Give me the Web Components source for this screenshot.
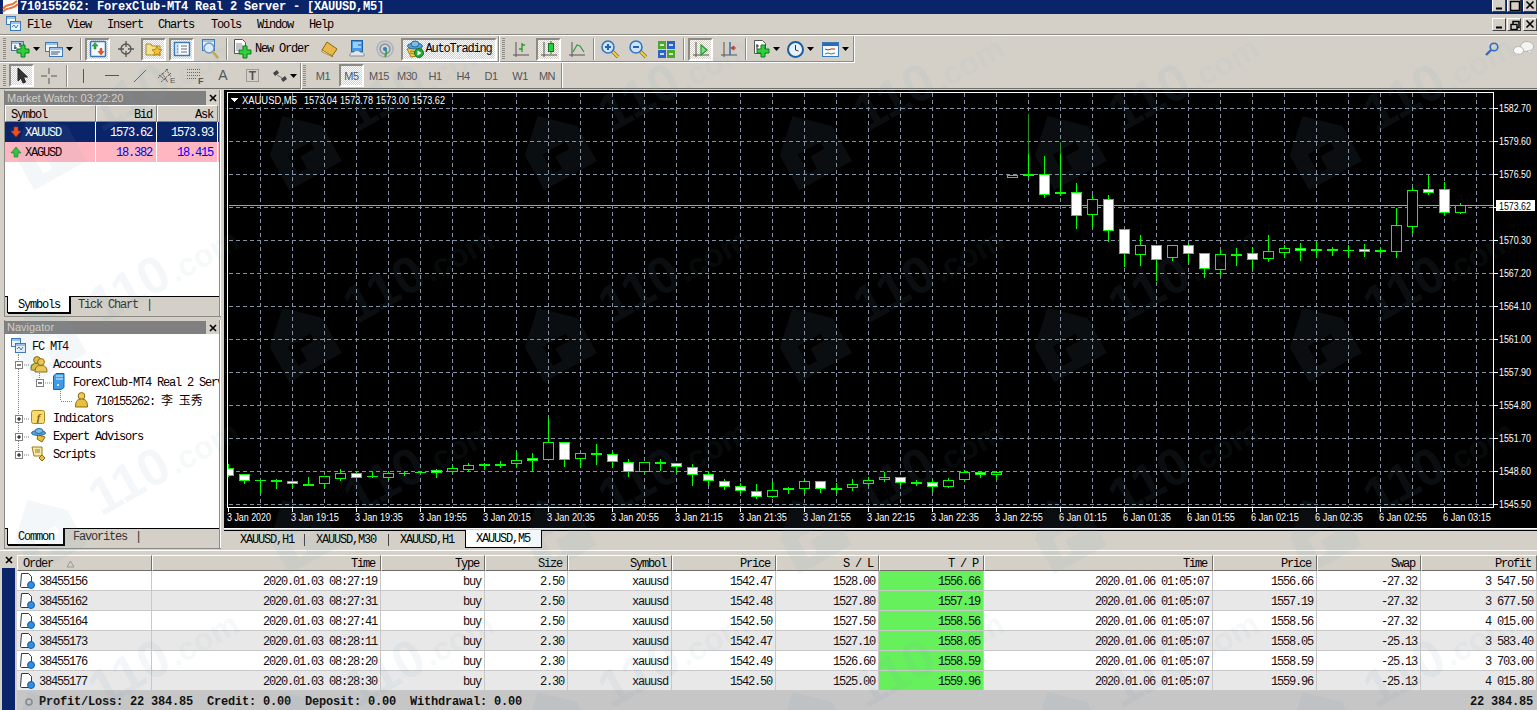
<!DOCTYPE html>
<html>
<head>
<meta charset="utf-8">
<title>MT4</title>
<style>
  html, body { margin: 0; padding: 0; overflow: hidden; background: #d4d0c8; }
</style>
</head>
<body>
<mt-app></mt-app>
<script>
// Shared bits
const UI_FONT = `12px/1 "Liberation Mono", "Noto Sans CJK SC", monospace`;
const svg = (w, h, body) => `<svg width="${w}" height="${h}" viewBox="0 0 ${w} ${h}" style="display:block;flex:none;overflow:visible">${body}</svg>`;
const plus = (x, y) => `<path d="M${x + 4} ${y}h4v4h4v4h-4v4h-4v-4h-4v-4h4z" fill="#2fd03a" stroke="#0c7a22"/>`;
const axes = `<path d="M4 2v15M1 15h16" stroke="#555" fill="none"/>`;
const win = (x, y, w, h) => `<rect x="${x}.5" y="${y}.5" width="${w}" height="${h}" fill="#eef4fb" stroke="#3b78b8"/><rect x="${x + 1}" y="${y + 1}" width="${w - 1}" height="2" fill="#9cc2e8"/>`;
const lens = (sign) => `<path d="M11 11l6 6" stroke="#8a6a10" stroke-width="3.4"/><path d="M11 11l6 6" stroke="#f0d050" stroke-width="2"/><circle cx="7" cy="7" r="6" fill="#cfe2f7" stroke="#2f78c8" stroke-width="1.6"/><path d="${sign}" stroke="#2a62a8" stroke-width="2"/>`;
const dd = svg(7, 4, `<path d="M0 0h7l-3.5 4z" fill="#000"/>`);
const head = (x, y, c) => `<circle cx="${x}" cy="${y}" r="3.4" fill="${c}" stroke="#8a6a10"/><path d="M${x - 6} ${y + 10}c0-5 2-6.5 6-6.5s6 1.500 6 6.500z" fill="${c}" stroke="#8a6a10"/>`;

const ICONS = {
  appicon: svg(15, 14, `<rect width="15" height="14" fill="#fff"/><path d="M0 9C4 2 7 8 14 1M0 12C4 6 8 11 15 4" stroke="#e8743a" stroke-width="1.800" fill="none"/>`),
  winicon: svg(15, 15, `${win(0, 0, 9, 8)}${win(4, 5, 10, 9)}<path d="M6 11l2-2 2 3 2-3" stroke="#3b78b8" fill="none"/>`),
  newchart: svg(19, 18, `${win(0, 1, 12, 9)}<path d="M3 8h3M4 5v4M8 4h2M9 3v4" stroke="#333"/>${plus(6, 5)}`),
  profile: svg(18, 17, `${win(0, 1, 12, 9)}${win(4, 6, 13, 9)}<path d="M6 11h9M6 13h7" stroke="#456"/>`),
  watch: svg(18, 18, `<rect x="1.500" y="1.500" width="15" height="15" rx="1" fill="#f4f8fd" stroke="#3b78b8" stroke-width="1.500"/><path d="M6 2.500l3 3.500H7v3H5V6H3z" fill="#27b53a" stroke="#127a22" stroke-width=".5"/><path d="M12 15l-3-3.500h2v-3h2v3h2z" fill="#e8562a" stroke="#a83a12" stroke-width=".5"/>`),
  data: svg(16, 16, `<circle cx="8" cy="8" r="5" fill="none" stroke="#555" stroke-width="1.300"/><path d="M8 0v6M8 10v6M0 8h6M10 8h6" stroke="#555" stroke-width="1.300"/>`),
  nav: svg(18, 18, `<path d="M1 4h5l1 2h8v9H1z" fill="#f6e08a" stroke="#a88a30"/><path d="M12 6l1.600 3.400 3.400.4-2.600 2.400.8 3.400-3.200-1.800-3.200 1.800.8-3.400-2.600-2.400 3.400-.4z" fill="#f2c230" stroke="#a87a10" stroke-width=".8"/>`),
  term: svg(18, 18, `<rect x="1.500" y="2.500" width="15" height="13" fill="#fff" stroke="#3b78b8" stroke-width="1.500"/><rect x="3" y="4" width="3" height="10" fill="#cfe0f2"/><path d="M8 6h6M8 9h6M8 12h6" stroke="#667" /><path d="M4 6h1M4 9h1M4 12h1" stroke="#c33"/>`),
  tester: svg(19, 20, `${win(1, 0, 12, 11)}<circle cx="8" cy="9" r="5" fill="#dbe9f8" stroke="#6f93b8" stroke-width="1.400"/><path d="M12 13l5 6" stroke="#c9a83a" stroke-width="2.400"/>`),
  order: svg(19, 20, `<path d="M1.500.5h8l3 3v11h-11z" fill="#fff" stroke="#555"/><path d="M3 5h6M3 7h7M3 9h7M3 11h4" stroke="#889"/>${plus(6, 7)}`),
  book: svg(17, 16, `<path d="M6 1l10 7-5 7L1 9z" fill="#e8b848" stroke="#8a6414"/><path d="M1 9l10 6 1 1-11-5z" fill="#fff0c0" stroke="#8a6414" stroke-width=".6"/>`),
  options: svg(16, 18, `<rect x="2.500" y=".5" width="11" height="11" fill="#3f9bea" stroke="#1a62a8"/><path d="M4 3h8M4 5h5M4 7h8" stroke="#fff"/><path d="M1 16c-1-3 2-4 4-4 1-2 5-2 6 0 3 0 5 2 4 4z" fill="#dfe7ef" stroke="#7f8f9f"/>`),
  signals: svg(18, 18, `<circle cx="9" cy="9" r="8" fill="none" stroke="#a8b4c0" stroke-width="1.500"/><circle cx="9" cy="9" r="5" fill="none" stroke="#7f93a8" stroke-width="1.500"/><circle cx="9" cy="9" r="2" fill="#3a7ab8"/><path d="M10 10c1 3 0 5-1 7" stroke="#3aa04a" stroke-width="1.800" fill="none"/>`),
  auto: svg(18, 18, `<path d="M1 9l14-2 2 8-12 2z" fill="#f0cc58" stroke="#9a7a18"/><ellipse cx="9" cy="6" rx="7.500" ry="3" fill="#58a0d8" stroke="#2a6aa0"/><ellipse cx="9" cy="4" rx="4" ry="3" fill="#7cbce8" stroke="#2a6aa0"/><path d="M4 11l6 1M4 13l4 1" stroke="#9a7a18"/><circle cx="13" cy="13" r="4.500" fill="#1fa83a" stroke="#0c7a22"/><path d="M11.500 10.500l4 2.500-4 2.500z" fill="#fff"/>`),
  bar: svg(18, 18, `${axes}<path d="M10 3v9M7 9h3M10 5h3" stroke="#1f9a2a" fill="none" stroke-width="1.300"/>`),
  candle: svg(18, 19, `${axes}<path d="M11 1v13" stroke="#1a7a22"/><rect x="8.500" y="3.500" width="5" height="8" fill="#26d03a" stroke="#0c7a22"/>`),
  line: svg(18, 18, `${axes}<path d="M5 12l4-7 3 1 4 6" stroke="#2f9a3f" fill="none" stroke-width="1.200"/>`),
  zoomin: svg(18, 18, lens("M4 7h6M7 4v6")),
  zoomout: svg(18, 18, lens("M4 7h6")),
  tile: svg(17, 17, `<rect width="8" height="8" fill="#4aa82a"/><rect x="9" width="8" height="8" fill="#2a62c8"/><rect y="9" width="8" height="8" fill="#2a62c8"/><rect x="9" y="9" width="8" height="8" fill="#4aa82a"/><path d="M2 4h4M11 4h4M2 13h4M11 13h4" stroke="#fff" stroke-width="1.500"/>`),
  scroll: svg(18, 18, `${axes}<path d="M9 5l6 5-6 5z" fill="#7fe08a" stroke="#1f9a2a" stroke-width="1.200"/>`),
  shift: svg(18, 18, `${axes}<path d="M10 2v13" stroke="#2a62a8" stroke-width="1.400"/><path d="M16 8h-3M11 8l3-2v4z" fill="#c83a1a" stroke="#c83a1a"/>`),
  template: svg(17, 18, `<path d="M1.500.5h8l3 3v10h-11z" fill="#fff" stroke="#555"/><path d="M3 6h3M4 4v5" stroke="#333"/>${plus(4, 5)}`),
  clock: svg(17, 17, `<circle cx="8.500" cy="8.500" r="7.500" fill="#e8f2fb" stroke="#1a5ea8" stroke-width="2"/><path d="M8.500 4v5l3 1" stroke="#333" fill="none"/>`),
  tmpl: svg(17, 15, `<rect x=".5" y=".5" width="16" height="14" fill="#f4f8fd" stroke="#3b78b8"/><rect x="1" y="1" width="15" height="3" fill="#2a6ab8"/><path d="M3 7l3 1 3-1 4 0" stroke="#a83a1a" fill="none"/><path d="M3 12l3-1 3 1 4-1" stroke="#2f9a3f" fill="none"/>`),
  search: svg(14, 14, `<circle cx="9" cy="5" r="3.800" fill="none" stroke="#2f6ac8" stroke-width="1.600"/><path d="M6 8l-5 5" stroke="#2f6ac8" stroke-width="2.400"/>`),
  chat: svg(22, 16, `<ellipse cx="14" cy="5.500" rx="6.500" ry="5" fill="#f4f4f2" stroke="#b4b4b0"/><path d="M17 9l2 4-5-3z" fill="#f4f4f2" stroke="#b4b4b0" stroke-width=".6"/><ellipse cx="5.500" cy="9.500" rx="5" ry="4" fill="#fafaf8" stroke="#b4b4b0"/><path d="M3 13l-1 2 4-2z" fill="#fafaf8" stroke="#b4b4b0" stroke-width=".6"/>`),
  cursor: svg(12, 17, `<path d="M2 1v13l3-3 2 5 2.500-1-2-5h4z" fill="#333" stroke="#222"/>`),
  cross: svg(16, 16, `<path d="M8 0v6M8 10v6M0 8h6M10 8h6" stroke="#555"/>`),
  vline: svg(3, 14, `<path d="M1.500 0v14" stroke="#555"/>`),
  hline: svg(14, 3, `<path d="M0 1.500h14" stroke="#555"/>`),
  trend: svg(14, 14, `<path d="M1 13L13 1" stroke="#666"/>`),
  channel: svg(20, 20, `<path d="M1 12l10-9M4 16l10-9M5 7l5 8M9 3l5 8M2 9l9 7" stroke="#555" fill="none" stroke-dasharray="2 1"/><text x="13" y="17" font-size="8" font-family="Liberation Sans" fill="#555">E</text>`),
  fibo: svg(19, 20, `<path d="M1 3.500h14M1 6.500h14M1 9.500h14M1 12.500h10" stroke="#666" stroke-dasharray="1 1"/><text x="12" y="18" font-size="9" font-family="Liberation Sans" font-weight="bold" fill="#555">F</text>`),
  letterA: svg(12, 17, `<text x="6" y="13" text-anchor="middle" font-size="14" font-family="Liberation Sans" fill="#555">A</text>`),
  labelT: svg(15, 16, `<rect x="1.500" y="1.500" width="12" height="12" fill="none" stroke="#666" stroke-dasharray="1 1"/><text x="7.500" y="12" text-anchor="middle" font-size="12" font-weight="bold" font-family="Liberation Sans" fill="#555">T</text>`),
  arrows: svg(15, 14, `<path d="M1 4l4-3 2 3-4 3zM9 10l4-3 2 3-4 3z" fill="#444"/><path d="M5 6l5 3" stroke="#777"/>`),
  down: svg(12, 12, `<path d="M4 1h4v4h3l-5 6-5-6h3z" fill="#f0501e" stroke="#b03010" stroke-width=".6"/>`),
  up: svg(12, 12, `<path d="M6 1l5 6H8v4H4V7H1z" fill="#35c040" stroke="#0c7a22" stroke-width=".6"/>`),
  doc: svg(15, 16, `<path d="M1.500.5h7l3 3v11h-10c-1 0-1-1-1-1z" fill="#fff" stroke="#2a3a4a"/><circle cx="11" cy="12" r="3.500" fill="#2f8ee0" stroke="#1a5ea8"/>`),
  accounts: svg(18, 18, `<circle cx="4" cy="12" r="3.500" fill="#22c040"/>${head(7, 5, "#e8c040")}${head(11, 7, "#f0cc50")}`),
  server: svg(12, 17, `<path d="M3 0.500h8v14l-3 2H0.500V3z" fill="#3f9bea" stroke="#1a62a8"/><path d="M3 3h7M3 6h7" stroke="#dff0ff"/><circle cx="5" cy="12" r="1" fill="#fff"/>`),
  user: svg(13, 16, `<circle cx="6.500" cy="4" r="3.400" fill="#f0cc50" stroke="#8a6a10"/><path d="M.5 15c0-6 2-8 6-8s6 2 6 8z" fill="#e8c040" stroke="#8a6a10"/>`),
  func: svg(14, 14, `<rect x=".5" y=".5" width="13" height="13" rx="2" fill="#f8dc70" stroke="#a88a20"/><text x="7" y="11" text-anchor="middle" font-size="11" font-style="italic" font-weight="bold" font-family="Liberation Serif" fill="#8a5a10">f</text>`),
  expert: svg(16, 15, `<path d="M7 7l7 2-3 5-5-3z" fill="#e8c040" stroke="#8a6a10"/><ellipse cx="7.500" cy="5" rx="7" ry="2.500" fill="#58a0d8" stroke="#2a6aa0"/><ellipse cx="8" cy="3" rx="4" ry="2.500" fill="#7cbce8" stroke="#2a6aa0"/>`),
  scriptI: svg(15, 15, `<path d="M1 1h10v9H3z" fill="#f6e8a8" stroke="#9a7a18"/><path d="M4 4h5M4 6h5" stroke="#9a7a18"/><path d="M11 9l3 3-3 3-3-3z" fill="#e8c040" stroke="#8a6a10"/>`)
};

// Title bar with window buttons
class MtWinButtons extends HTMLElement {
  constructor() {
    super();
    this.attachShadow({ mode: "open" });
    const middle = this.getAttribute("restore") !== null
      ? `<path d="M5 5V2.500h6v6H9" fill="none" stroke="#000" stroke-width="1.500"/><rect x="3" y="5.500" width="6" height="5" fill="none" stroke="#000" stroke-width="1.400"/>`
      : `<rect x="2.500" y="1.500" width="9" height="9" fill="none" stroke="#000" stroke-width="1.500"/>`;
    this.shadowRoot.innerHTML = `
      <style>
        :host { display: flex; flex: none; height: 13px; gap: 0; }
        b { display: block; width: 14px; height: 13px; background: #d4d0c8; border: solid; border-width: 1px; border-color: #fff #404040 #404040 #fff; box-sizing: border-box; margin-right: 1px; }
        b:last-child { margin: 0 0 0 1px; }
        svg { display: block; }
      </style>
      <b><svg width="12" height="11"><path d="M3 8.500h6" stroke="#000" stroke-width="2"/></svg></b>
      <b><svg width="13" height="11">${middle}</svg></b>
      <b><svg width="12" height="11"><path d="M2.500 1.500l7 7M9.500 1.500l-7 7" stroke="#000" stroke-width="1.600"/></svg></b>
    `;
  }
}

class MtTitlebar extends HTMLElement {
  constructor() {
    super();
    this.attachShadow({ mode: "open" });
    this.shadowRoot.innerHTML = `
      <style>
        :host { display: flex; flex: none; align-items: center; height: 14px; background: #0a246a; overflow: hidden; padding-left: 3px; }
        .t { color: #fff; font-weight: bold; letter-spacing: -.2px; margin-left: 2px; white-space: pre; flex: 1; }
        mt-win-buttons { margin-top: -3px; }
      </style>
      ${ICONS.appicon}
      <span class="t">710155262: ForexClub-MT4 Real 2 Server - [XAUUSD,M5]</span>
      <mt-win-buttons></mt-win-buttons>
    `;
  }
}

class MtMenubar extends HTMLElement {
  constructor() {
    super();
    this.attachShadow({ mode: "open" });
    const items = [["File", 27], ["View", 67], ["Insert", 107], ["Charts", 158], ["Tools", 211], ["Window", 257], ["Help", 309]];
    let cur = 21;
    const html = items.map(([name, x]) => {
      const m = x - cur;
      cur = x + name.length * 6;
      return `<span style="margin-left:${m}px">${name}</span>`;
    }).join("");
    this.shadowRoot.innerHTML = `
      <style>
        :host { display: flex; flex: none; align-items: center; height: 20px; padding-left: 6px; }
        span { letter-spacing: -1.200px; width: auto; margin-top: 2px; }
        .sp { flex: 1; }
        svg { margin-top: -1px; }
      </style>
      ${ICONS.winicon}${html}<div class="sp"></div><mt-win-buttons restore></mt-win-buttons>
    `;
  }
}

// One toolbar button: slotted icon and optional label
class MtTool extends HTMLElement {
  constructor() {
    super();
    this.attachShadow({ mode: "open" });
    this.shadowRoot.innerHTML = `
      <style>
        :host { display: flex; flex: none; align-items: center; justify-content: center; gap: 3px; height: 23px; box-sizing: border-box; white-space: pre; }
        :host([pressed]) { background: repeating-conic-gradient(#fff 0 25%, #d4d0c8 0 50%) 0 0 / 2px 2px; border: 2px solid; border-color: #8c8a84 #fff #fff #8c8a84; }
      </style>
      <slot></slot>
    `;
  }
}

// A strip of tools, gripper, separators
class MtToolbar extends HTMLElement {
  constructor() {
    super();
    this.attachShadow({ mode: "open" });
    this.shadowRoot.innerHTML = `
      <style>
        :host { display: flex; flex: none; align-items: center; box-sizing: border-box; }
      </style>
      <slot></slot>
    `;
  }
}

const SEP = `display:block;flex:none;width:1px;height:22px;background:#8c8a84;border-right:1px solid #fff`;
const GRIP = `display:block;flex:none;width:3px;height:22px;background:repeating-linear-gradient(#8c8a84 0 1px,#d4d0c8 1px 2px)`;
const EDGE = `display:block;flex:none;width:1px;height:26px;background:#fff;border-left:1px solid #8c8a84`;
const label = (s, ml = 0) => `<span style="letter-spacing:-1.2px;margin-left:${ml}px">${s}</span>`;
const tf = (s) => `<span style="font:11px 'Liberation Sans',sans-serif;letter-spacing:-.5px;color:#555">${s}</span>`;

function buildTools(list) {
  let cur = 0;
  return list.map((it) => {
    const [kind, x, w, body, pressed] = it;
    const m = x - cur;
    if (kind === "sep" || kind === "grip" || kind === "edge") {
      const st = kind === "sep" ? SEP : kind === "grip" ? GRIP : EDGE;
      const bw = kind === "grip" ? 3 : 2;
      cur = x + bw;
      return `<i style="${st};margin-left:${m}px"></i>`;
    }
    cur = x + w;
    return `<mt-tool ${pressed ? "pressed" : ""} style="width:${w}px;margin-left:${m}px">${body}</mt-tool>`;
  }).join("");
}

class MtToolbars extends HTMLElement {
  constructor() {
    super();
    this.attachShadow({ mode: "open" });
    const I = ICONS;
    const row1 = buildTools([
      ["grip", 3], ["t", 8, 34, I.newchart + dd], ["t", 42, 34, I.profile + dd], ["sep", 80],
      ["t", 85, 25, I.watch, 1], ["t", 110, 31, I.data], ["t", 141, 25, I.nav, 1], ["t", 169, 25, I.term, 1], ["t", 194, 32, I.tester],
      ["sep", 226], ["t", 232, 78, I.order + label("New Order")], ["t", 312, 34, I.book], ["t", 346, 22, I.options], ["t", 368, 33, I.signals],
      ["t", 401, 96, I.auto + label("AutoTrading", -2), 1], ["edge", 498], ["grip", 502],
      ["t", 509, 24, I.bar], ["t", 536, 25, I.candle, 1], ["t", 561, 32, I.line], ["sep", 593],
      ["t", 597, 26, I.zoomin], ["t", 625, 26, I.zoomout], ["t", 653, 26, I.tile], ["sep", 683],
      ["t", 688, 25, I.scroll, 1], ["t", 713, 32, I.shift], ["sep", 745],
      ["t", 751, 30, I.template + dd], ["t", 785, 30, I.clock + dd], ["t", 819, 32, I.tmpl + dd]
    ]);
    const row2 = buildTools([
      ["grip", 3], ["t", 9, 25, I.cursor, 1], ["t", 37, 24, I.cross], ["sep", 66],
      ["t", 71, 24, I.vline], ["t", 100, 24, I.hline], ["t", 128, 24, I.trend], ["t", 155, 24, I.channel], ["t", 183, 24, I.fibo],
      ["t", 211, 24, I.letterA], ["t", 240, 24, I.labelT], ["t", 270, 28, I.arrows + dd], ["edge", 300], ["grip", 303],
      ["t", 311, 24, tf("M1")], ["t", 339, 25, tf("M5"), 1], ["t", 367, 24, tf("M15")], ["t", 395, 24, tf("M30")],
      ["t", 423, 24, tf("H1")], ["t", 451, 24, tf("H4")], ["t", 479, 24, tf("D1")], ["t", 508, 24, tf("W1")], ["t", 535, 24, tf("MN")]
    ]);
    this.shadowRoot.innerHTML = `
      <style>
        :host { display: block; flex: none; border-top: 1px solid #8c8a84; }
        .line { display: flex; }
        .a { height: 27px; border-top: 1px solid #fff; box-sizing: content-box; }
        .a mt-toolbar { width: 855px; height: 27px; border-right: 1px solid #fff; border-bottom: 1px solid #fff; box-shadow: inset 0 -1px 0 #8c8a84, inset -1px 0 0 #8c8a84; }
        .b { height: 25px; border-bottom: 1px solid #6f6d68; }
        .b mt-toolbar { width: 563px; height: 25px; border-right: 1px solid #fff; box-shadow: inset -1px 0 0 #8c8a84; }
        .right { flex: 1; display: flex; align-items: center; justify-content: flex-end; gap: 14px; padding-right: 2px; margin-top: -2px; }
      </style>
      <div class="line a">
        <mt-toolbar>${row1}</mt-toolbar>
        <div class="right">${I.search}${I.chat}</div>
      </div>
      <div class="line b"><mt-toolbar>${row2}</mt-toolbar></div>
    `;
  }
}

// Docked panel: caption, body slot, bottom tabs
class MtPanel extends HTMLElement {
  constructor() {
    super();
    this.attachShadow({ mode: "open" });
    const tabs = (this.getAttribute("tabs") || "").split("|");
    const capH = this.getAttribute("cap") || 14;
    const active = tabs[0];
    const rest = tabs.slice(1).map((t) => `<span class="off">${t}</span>`).join("");
    const tabPad = this.getAttribute("gap") || 11;
    this.shadowRoot.innerHTML = `
      <style>
        :host { display: flex; flex-direction: column; box-sizing: border-box; margin-left: 4px; width: 217px; padding: 1px 0 3px; border-right: 1px solid #fff; box-shadow: inset 1px 0 0 #8c8a84, inset -1px 0 0 #8c8a84, 0 1px 0 #8c8a84; }
        .cap { display: flex; height: ${capH}px; flex: none; }
        .cap .c { width: 202px; background: #808080; color: #d4d0c8; font: 11px/${capH}px "Liberation Sans", sans-serif; padding-left: 3px; box-sizing: border-box; }
        .cap .x { flex: 1; display: flex; align-items: center; justify-content: center; }
        .body { flex: 1; min-height: 0; background: #fff; margin: 0 1px; overflow: hidden; }
        .tabs { height: 17px; flex: none; display: flex; align-items: center; margin: 0 1px; border-top: 1px solid #000; box-sizing: border-box; padding-left: 2px; }
        .on { background: #fff; height: 17px; margin-top: -1px; box-sizing: border-box; border: solid #000; border-width: 0 1px 1px 1px; padding: 3px 9px 0 10px; box-shadow: 1px 1px 0 #000; }
        .off { margin-left: ${tabPad}px; color: #333; }
        .bar { margin-left: 8px; color: #333; }
      </style>
      <div class="cap">
        <div class="c">${this.getAttribute("heading")}</div>
        <div class="x"><svg width="8" height="8"><path d="M1 1l6 6M7 1L1 7" stroke="#000" stroke-width="1.600"/></svg></div>
      </div>
      <div class="body"><slot></slot></div>
      <div class="tabs" style="letter-spacing:-1.200px">
        <span class="on">${active}</span>${rest}<span class="bar">|</span>
      </div>
    `;
  }
}

class MtMarketWatch extends HTMLElement {
  constructor() {
    super();
    this.attachShadow({ mode: "open" });
    this.shadowRoot.innerHTML = `
      <style>
        :host { display: block; letter-spacing: -1.200px; }
        .row { display: grid; grid-template-columns: 91px 61px 61px; height: 20px; align-items: stretch; }
        .row > div { display: flex; align-items: center; justify-content: flex-end; padding: 2px 4px 0 0; box-sizing: border-box; border-right: 1px solid #fff; }
        .row > div:first-child { justify-content: flex-start; padding-left: 5px; gap: 3px; }
        .row > div:first-child svg { margin-top: -2px; }
        .head { height: 17px; background: #d4d0c8; }
        .head > div { border-top: 1px solid #fff; border-left: 1px solid #fff; border-right: 1px solid #808080 !important; border-bottom: 1px solid #808080; }
        .sel { background: #0a246a; color: #fff; }
        .pink { background: #ffb6c1; color: #00f; }
        .pink > div:first-child { color: #000; }
      </style>
      <div class="row head"><div>Symbol</div><div>Bid</div><div>Ask</div></div>
      <div class="row sel"><div>${ICONS.down}XAUUSD</div><div>1573.62</div><div>1573.93</div></div>
      <div class="row pink"><div>${ICONS.up}XAGUSD</div><div>18.382</div><div>18.415</div></div>
    `;
  }
}

class MtNavigator extends HTMLElement {
  constructor() {
    super();
    this.attachShadow({ mode: "open" });
    const dot = `stroke="#808080" stroke-dasharray="1 1" fill="none"`;
    const box = (x, y, open) => `<rect x="${x}.5" y="${y}.5" width="7" height="7" fill="#fff" stroke="#808080"/><path d="M${x + 2} ${y + 4}h4${open ? "" : `M${x + 4} ${y + 2}v4`}" stroke="#000"/>`;
    // prefix drawings use panel x, y from row top
    const rows = [
      { w: 27, art: `<path d="M18.500 15v3" ${dot}/>`, icon: [11, 1, ICONS.winicon], text: "FC MT4" },
      { w: 48, art: `<path d="M18.500 0v18M22 10h8" ${dot}/>${box(15, 6, true)}`, icon: [30, 0, ICONS.accounts], text: "Accounts" },
      { w: 68, art: `<path d="M18.500 0v18M39.500 0v6M43 10h9" ${dot}/>${box(36, 6, true)}`, icon: [53, 0, ICONS.server], text: "ForexClub-MT4 Real 2 Server" },
      { w: 90, art: `<path d="M18.500 0v18M60.500 0v10M61 10.500h12" ${dot}/>`, icon: [75, 1, ICONS.user], text: `710155262: <span class="cjk">李 玉秀</span>` },
      { w: 48, art: `<path d="M18.500 0v18M22 10h8" ${dot}/>${box(15, 6, false)}`, icon: [31, 1, ICONS.func], text: "Indicators" },
      { w: 48, art: `<path d="M18.500 0v18M22 10h8" ${dot}/>${box(15, 6, false)}`, icon: [31, 1, ICONS.expert], text: "Expert Advisors" },
      { w: 48, art: `<path d="M18.500 0v6M22 10h8" ${dot}/>${box(15, 6, false)}`, icon: [31, 1, ICONS.scriptI], text: "Scripts" }
    ];
    const html = rows.map((r) => {
      return `<div class="row">
        <div class="pre" style="width:${r.w}px">
          <svg width="${r.w}" height="18" viewBox="5 0 ${r.w} 18">${r.art}</svg>
          <div class="ic" style="left:${r.icon[0] - 5}px;top:${r.icon[1]}px">${r.icon[2]}</div>
        </div>
        <span>${r.text}</span>
      </div>`;
    }).join("");
    this.shadowRoot.innerHTML = `
      <style>
        :host { display: block; padding-top: 3px; letter-spacing: -1.200px; white-space: nowrap; }
        .row { display: flex; align-items: center; height: 18px; }
        .pre { position: relative; height: 18px; flex: none; }
        .pre svg { display: block; }
        .ic { position: absolute; }
        .row > span { margin-top: 1px; }
        .cjk { font-family: "Noto Sans CJK SC", sans-serif; letter-spacing: 0; word-spacing: 3px; }
      </style>
      ${html}
    `;
  }
}

// Chart drawing, in page coordinates
const CANDLES = [
  [464,468,475,476,"w"],[474,474,480,483,"w"],[480,480,480,492,"t"],[479,480,481,488,"f"],[481,481,483,487,"w"],
  [477,484,485,485,"f"],[476,476,483,486,"b"],[469,473,478,480,"b"],[471,473,477,477,"w"],[472,476,476,477,"t"],
  [471,473,477,479,"b"],[471,473,473,475,"t"],[472,472,472,473,"t"],[469,470,472,477,"w"],[466,468,471,472,"b"],
  [463,465,469,470,"b"],[463,464,465,469,"f"],[461,464,465,467,"f"],[452,460,463,467,"b"],[453,458,460,471,"w"],
  [417,442,459,459,"b"],[442,442,459,466,"w"],[453,453,458,467,"b"],[444,453,454,464,"f"],[452,454,461,467,"w"],
  [459,462,471,476,"w"],[462,462,471,472,"b"],[459,462,463,470,"f"],[463,463,466,472,"w"],[464,467,474,485,"w"],
  [472,474,480,484,"w"],[479,481,486,489,"w"],[483,486,490,492,"w"],[484,491,496,498,"w"],[482,490,496,497,"b"],
  [487,488,489,493,"f"],[479,481,488,493,"b"],[481,481,488,492,"w"],[483,488,489,493,"f"],[479,484,487,490,"b"],
  [477,480,483,485,"b"],[472,477,479,481,"b"],[477,477,482,485,"w"],[480,482,483,485,"f"],[479,482,486,491,"w"],
  [478,480,486,487,"b"],[470,472,479,480,"b"],[471,472,474,477,"w"],[471,472,474,478,"b"],[175,175,177,177,"b"],
  [114,174,175,176,"f"],[156,174,194,197,"w"],[142,192,193,195,"f"],[183,192,215,228,"w"],[195,199,214,226,"b"],
  [195,199,230,241,"w"],[229,229,253,266,"w"],[235,245,254,265,"b"],[245,245,259,280,"w"],[245,245,257,260,"b"],
  [243,245,253,262,"w"],[253,253,268,277,"w"],[249,254,269,274,"b"],[248,254,255,265,"f"],[247,253,259,268,"w"],
  [235,251,258,261,"b"],[245,248,252,257,"b"],[243,248,250,260,"w"],[242,249,250,257,"f"],[247,249,250,255,"f"],
  [245,250,250,257,"t"],[244,249,251,256,"w"],[248,250,251,253,"f"],[208,225,251,257,"b"],[188,190,226,232,"b"],
  [175,189,192,194,"w"],[182,189,212,214,"w"],[203,205,212,213,"b"]
];
const PRICES = ["1582.70","1579.60","1576.50","1573.40","1570.30","1567.20","1564.10","1561.00","1557.90","1554.80","1551.70","1548.60","1545.50"];
const DATES = ["3 Jan 2020","3 Jan 19:15","3 Jan 19:35","3 Jan 19:55","3 Jan 20:15","3 Jan 20:35","3 Jan 20:55","3 Jan 21:15","3 Jan 21:35","3 Jan 21:55","3 Jan 22:15","3 Jan 22:35","3 Jan 22:55","6 Jan 01:15","6 Jan 01:35","6 Jan 01:55","6 Jan 02:15","6 Jan 02:35","6 Jan 02:55","6 Jan 03:15"];

class MtChart extends HTMLElement {
  constructor() {
    super();
    this.attachShadow({ mode: "open" });
    // chart labels are narrower than the font: squeeze them to the measured width
    const ctx = document.createElement("canvas").getContext("2d");
    ctx.font = `11px "Liberation Sans"`;
    const txt = (x, y, s, len, fill = "#fff") => {
      const k = (len / ctx.measureText(s).width).toFixed(3);
      return `<text transform="translate(${x} ${y}) scale(${k} 1)" fill="${fill}">${s}</text>`;
    };
    let p = "";
    // grid
    for (let x = 260; x <= 1476; x += 32) p += `<path d="M${x}.5 93V507" class="g"/>`;
    PRICES.forEach((v, i) => {
      const y = 108 + i * 33;
      p += `<path d="M229 ${y}.5H1493" class="g"/><path d="M1494 ${y}.5h4" stroke="#fff"/>`;
      p += txt(1499, y + 4, v, 32);
    });
    // price line
    p += `<path d="M229 205.500H1493" stroke="#a0a0aa"/>`;
    // candles, clipped by the plot frame
    let c = "";
    CANDLES.forEach(([hi, top, bot, lo, kind], i) => {
      const cx = 228 + 16 * i;
      c += `<path d="M${cx}.5 ${hi}V${lo + 1}" stroke="#0f0"/>`;
      if (kind === "f") c += `<rect x="${cx - 5}" y="${top}" width="11" height="2" fill="#0f0"/>`;
      else if (kind === "t") c += `<rect x="${cx - 5}" y="${top}" width="11" height="1" fill="#0f0"/>`;
      else c += `<rect x="${cx - 5}.5" y="${top}.5" width="10" height="${bot - top}" fill="${kind === "w" ? "#fff" : "#000"}" stroke="#0f0"/>`;
    });
    p += `<clipPath id="plot"><rect x="228" y="93" width="1265" height="414"/></clipPath><g clip-path="url(#plot)">${c}</g>`;
    // wicks faded in the picture
    p += `<path d="M1028.500 114V154M1060.500 142V154" stroke="#2a8a2a"/>`;
    // frame
    p += `<path d="M227.500 92V508M227 92.500H1494M1493.500 92V508M227 507.500H1494" stroke="#fff"/>`;
    // time axis
    DATES.forEach((d, i) => {
      const x = 228 + i * 64;
      p += `<path d="M${x}.5 508v4" stroke="#fff"/>`;
      p += txt(x - 1, 521, d, i === 0 ? 44 : 48);
    });
    // caption
    p += `<path d="M230 98h8l-4 4z" fill="#fff"/>`;
    p += txt(242, 104, "XAUUSD,M5", 55);
    ["1573.04", "1573.78", "1573.00", "1573.62"].forEach((v, i) => { p += txt(304 + i * 36, 104, v, 33); });
    // bid tag
    p += `<rect x="1496" y="200" width="39" height="11" fill="#fff"/>`;
    p += txt(1499, 209.500, "1573.62", 32, "#000");

    this.shadowRoot.innerHTML = `
      <style>
        :host { display: block; height: 438px; background: #000; flex: none; }
        svg { display: block; font: 11px "Liberation Sans", sans-serif; letter-spacing: 0; }
        path, rect { shape-rendering: crispEdges; }
        .g { stroke: #8592a3; stroke-dasharray: 4 3; fill: none; }
      </style>
      <svg width="1313" height="438" viewBox="224 90 1313 438">${p}</svg>
    `;
  }
}

class MtChartTabs extends HTMLElement {
  constructor() {
    super();
    this.attachShadow({ mode: "open" });
    this.shadowRoot.innerHTML = `
      <style>
        :host { display: flex; flex: none; height: 18px; box-sizing: border-box; border-top: 1px solid #000; padding-left: 5px; letter-spacing: -1.200px; align-items: stretch; }
        span { display: flex; align-items: center; padding: 0 11px; position: relative; }
        span.sep::after { content: ""; position: absolute; right: 0; top: 3px; bottom: 2px; width: 1px; background: #444; }
        .t0 { width: 76px; box-sizing: border-box; }
        .t1 { width: 84px; box-sizing: border-box; }
        .on { background: #fff; border-left: 1px solid #000; border-right: 1px solid #000; border-bottom: 1px solid #000; margin-top: -1px; box-sizing: border-box; width: 77px; padding: 0 0 0 10px; }
      </style>
      <span class="t0 sep">XAUUSD,H1</span>
      <span class="t1 sep">XAUUSD,M30</span>
      <span class="t0">XAUUSD,H1</span>
      <span class="on">XAUUSD,M5</span>
    `;
  }
}

// Trade terminal table
const ORDERS = [
  ["38455156","2020.01.03 08:27:19","2.50","1542.47","1528.00","1556.66","-27.32","3 547.50"],
  ["38455162","2020.01.03 08:27:31","2.50","1542.48","1527.80","1557.19","-27.32","3 677.50"],
  ["38455164","2020.01.03 08:27:41","2.50","1542.50","1527.50","1558.56","-27.32","4 015.00"],
  ["38455173","2020.01.03 08:28:11","2.30","1542.47","1527.10","1558.05","-25.13","3 583.40"],
  ["38455176","2020.01.03 08:28:20","2.30","1542.49","1526.60","1558.59","-25.13","3 703.00"],
  ["38455177","2020.01.03 08:28:30","2.30","1542.50","1525.00","1559.96","-25.13","4 015.80"]
];

class MtTerminal extends HTMLElement {
  constructor() {
    super();
    this.attachShadow({ mode: "open" });
    const heads = ["Time","Type","Size","Symbol","Price","S / L","T / P","Time","Price","Swap","Profit"];
    const headHtml = `<div class="h first"><span>Order</span><svg width="9" height="8"><path d="M1 7h7L4.500 1z" fill="none" stroke="#999"/></svg></div>` + heads.map((h) => `<div class="h">${h}</div>`).join("");
    const rows = ORDERS.map((o, i) => {
      const [id, open, size, price, sl, tp, swap, profit] = o;
      const cells = [open, "buy", size, "xauusd", price, sl, `<tp>${tp}</tp>`, "2020.01.06 01:05:07", tp, swap, profit];
      return `<div class="c ord ${i % 2 ? "alt" : ""}">${ICONS.doc}<span>${id}</span></div>` +
        cells.map((c) => {
          const isTp = c.startsWith("<tp>");
          return `<div class="c ${i % 2 ? "alt" : ""} ${isTp ? "green" : ""}">${isTp ? c.replace(/<\/?tp>/g, "") : c}</div>`;
        }).join("");
    }).join("");
    this.shadowRoot.innerHTML = `
      <style>
        :host { display: flex; height: 160px; flex: none; box-sizing: border-box; border-top: 1px solid #fff; position: relative; }
        .side { width: 13px; margin-left: 2px; margin-right: 2px; flex: none; display: flex; flex-direction: column; }
        .side .x { height: 17px; display: flex; align-items: center; justify-content: center; padding-top: 1px; box-sizing: border-box; }
        .side .st { flex: 1; background: #0a246a; }
        .main { flex: 1; padding-top: 4px; min-width: 0; letter-spacing: -1.200px; }
        .grid { display: grid; grid-template-columns: 135px 229px 104px 83px 104px 104px 103px 105px 229px 104px 104px 116px; grid-auto-rows: 20px; grid-template-rows: 16px; }
        .h { display: flex; align-items: center; justify-content: flex-end; padding: 2px 5px 0 0; box-sizing: border-box; background: #d4d0c8; border: 1px solid; border-color: #fff #6f6d68 #6f6d68 #fff; }
        .h.first { justify-content: flex-start; padding-left: 5px; gap: 13px; }
        .c { display: flex; align-items: center; justify-content: flex-end; padding: 2px 3px 0 0; box-sizing: border-box; background: #fff; color: #111; border-right: 1px solid #c8c8c8; border-bottom: 1px solid #c8c8c8; }
        .c.alt { background: #e8e8e8; }
        .c.ord { justify-content: flex-start; padding-left: 3px; gap: 4px; }
        .c.ord svg { margin-top: -2px; }
        .c.green { background: #66f05c; }
        .sum { display: flex; justify-content: space-between; align-items: center; height: 19px; background: #c6c6c6; font-weight: bold; letter-spacing: -.2px; white-space: pre; padding: 2px 4px 0 8px; box-sizing: border-box; color: #111; }
        .sum .l { display: flex; align-items: center; gap: 6px; }
      </style>
      <div class="side">
        <div class="x"><svg width="8" height="8"><path d="M1 1l6 6M7 1L1 7" stroke="#000" stroke-width="1.600"/></svg></div>
        <div class="st"></div>
      </div>
      <div class="main">
        <div class="grid">${headHtml}${rows}</div>
        <div class="sum">
          <div class="l"><svg width="8" height="8"><circle cx="4" cy="4" r="3" fill="none" stroke="#888" stroke-width="1.500"/></svg><span>Profit/Loss: 22 384.85  Credit: 0.00  Deposit: 0.00  Withdrawal: 0.00</span></div>
          <span>22 384.85</span>
        </div>
      </div>
    `;
  }
}

// Faint site watermark laid over the whole shot
class MtWatermark extends HTMLElement {
  constructor() {
    super();
    this.attachShadow({ mode: "open" });
    let g = "";
    for (let j = 0; j < 4; j++) {
      for (let i = 0; i < 6; i++) {
        const x = 176 + 255 * i;
        const y = 91 + 192 * j;
        g += `<g transform="translate(${x} ${y}) rotate(-29)">
          <path fill-rule="evenodd" d="M-172 -22L-142 -50L-112 -22V18H-172ZM-156 -14V8H-146V-6H-130V-14Z"/>
          <text x="-2" y="0" text-anchor="end" font-size="52" font-weight="bold">110</text>
          <text x="0" y="0" font-size="32" font-weight="bold">.com</text>
        </g>`;
      }
    }
    this.shadowRoot.innerHTML = `
      <style>
        :host { position: absolute; left: 0; top: 0; width: 1537px; height: 710px; pointer-events: none; overflow: hidden; }
        svg { display: block; font-family: "Liberation Sans", sans-serif; letter-spacing: 0; fill: rgb(125, 165, 185); fill-opacity: .085; }
      </style>
      <svg width="1537" height="710">${g}</svg>
    `;
  }
}

class MtApp extends HTMLElement {
  constructor() {
    super();
    this.attachShadow({ mode: "open" });
    this.shadowRoot.innerHTML = `
      <style>
        :host { display: flex; flex-direction: column; position: relative; width: 1537px; height: 710px; overflow: hidden; background: #d4d0c8; color: #000; font: ${UI_FONT}; }
        .main { display: flex; height: 461px; flex: none; }
        .side { width: 224px; flex: none; padding-top: 1px; display: flex; flex-direction: column; gap: 4px; box-sizing: border-box; }
        .chartcol { flex: 1; min-width: 0; padding-top: 1px; display: flex; flex-direction: column; }
        .chartcol .rule { height: 2px; flex: none; border-top: 1px solid #fff; box-sizing: border-box; }
      </style>
      <mt-titlebar></mt-titlebar>
      <mt-menubar></mt-menubar>
      <mt-toolbars></mt-toolbars>
      <div class="main">
        <div class="side">
          <mt-panel style="height:226px" gap="8" heading="Market Watch: 03:22:20" tabs="Symbols|Tick Chart">
            <mt-market-watch></mt-market-watch>
          </mt-panel>
          <mt-panel style="height:228px" gap="9" cap="13" heading="Navigator" tabs="Common|Favorites">
            <mt-navigator></mt-navigator>
          </mt-panel>
        </div>
        <div class="chartcol">
          <mt-chart></mt-chart>
          <div class="rule"></div>
          <mt-chart-tabs></mt-chart-tabs>
        </div>
      </div>
      <mt-terminal></mt-terminal>
      <mt-watermark></mt-watermark>
    `;
  }
}

customElements.define("mt-win-buttons", MtWinButtons);
customElements.define("mt-titlebar", MtTitlebar);
customElements.define("mt-menubar", MtMenubar);
customElements.define("mt-tool", MtTool);
customElements.define("mt-toolbar", MtToolbar);
customElements.define("mt-toolbars", MtToolbars);
customElements.define("mt-panel", MtPanel);
customElements.define("mt-market-watch", MtMarketWatch);
customElements.define("mt-navigator", MtNavigator);
customElements.define("mt-chart", MtChart);
customElements.define("mt-chart-tabs", MtChartTabs);
customElements.define("mt-terminal", MtTerminal);
customElements.define("mt-watermark", MtWatermark);
customElements.define("mt-app", MtApp);
</script>
</body>
</html>
